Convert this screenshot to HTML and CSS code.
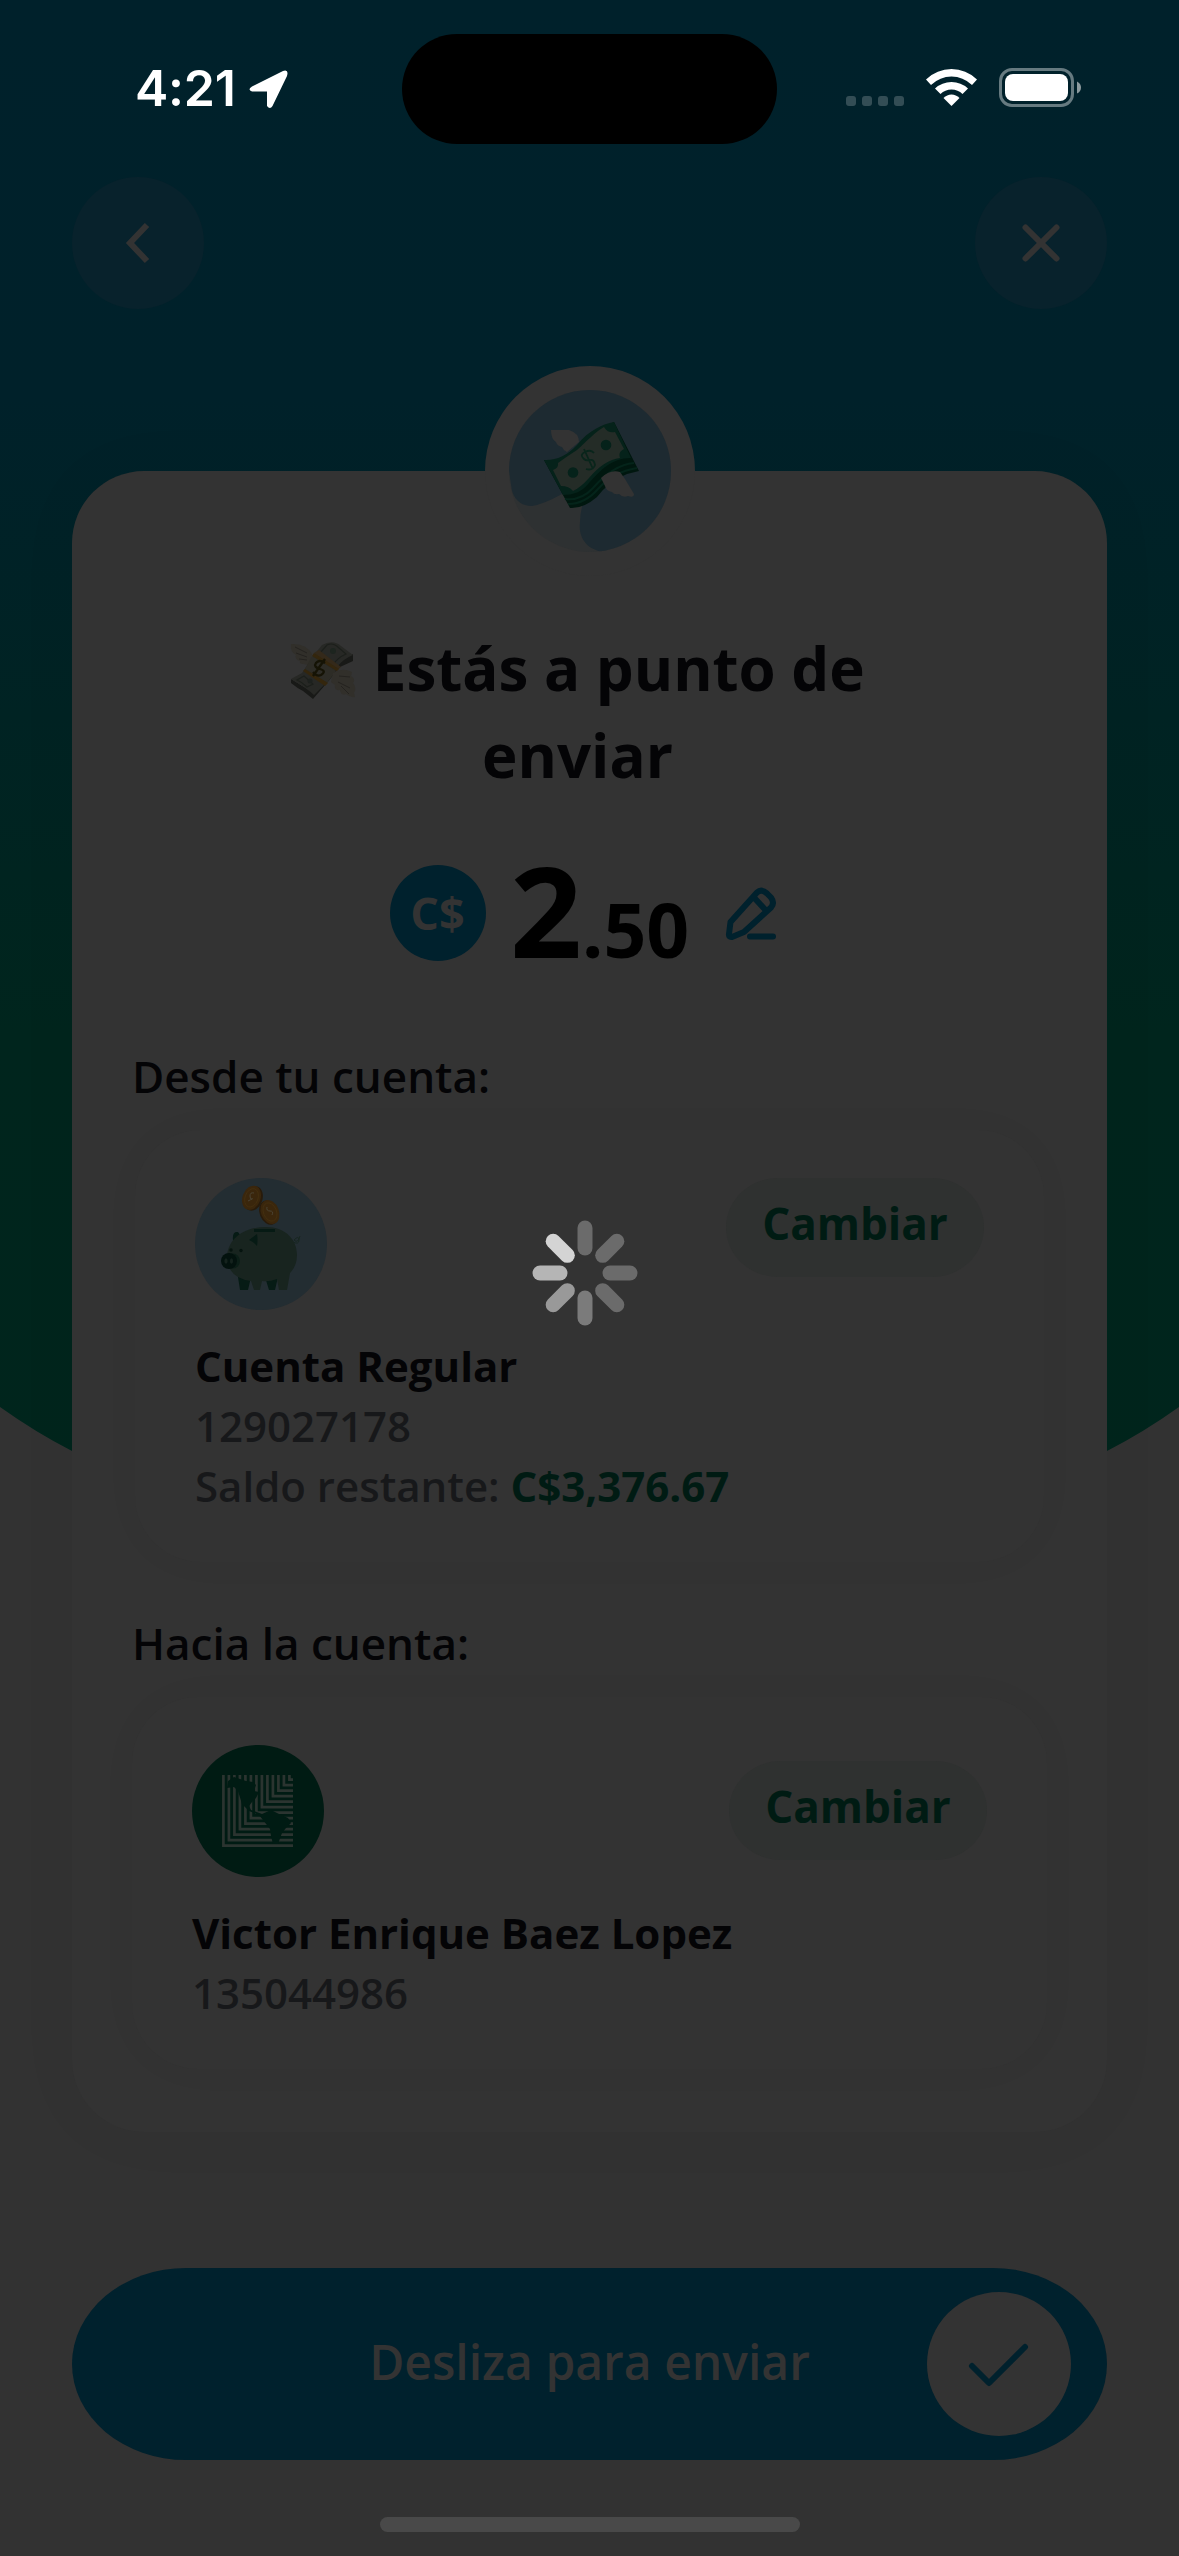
FILE: index.html
```html
<!DOCTYPE html>
<html lang="es">
<head>
<meta charset="utf-8">
<title>Confirmar envío</title>
<link rel="stylesheet" href="styles.css">
</head>
<body>
<div class="screen">
  <svg class="backdrop" viewBox="0 0 1179 1640" aria-hidden="true">
    <defs>
      <linearGradient id="sky" x1="0" y1="0" x2="0" y2="1">
        <stop offset="0" stop-color="#00212b"/>
        <stop offset=".25" stop-color="#00212a"/>
        <stop offset=".45" stop-color="#002323"/>
        <stop offset=".65" stop-color="#00251d"/>
        <stop offset="1" stop-color="#00251c"/>
      </linearGradient>
    </defs>
    <path fill="url(#sky)" d="M0 0H1179V1407Q1144 1432 1107 1451Q860 1590 590 1590Q320 1590 72 1451Q35 1432 0 1407Z"/>
  </svg>

  <header class="status">
    <div class="clock">
      <span class="time">4:21</span>
      <svg class="locate" viewBox="0 0 39 39"><path d="M3 16.500 34 1Q40-1 38 6L23.500 36Q21 40 18 36V21.500H3Q-2 19.500 3 16.500Z" fill="#fff"/></svg>
    </div>
    <div class="island"></div>
    <div class="signals">
      <span class="dots"><i></i><i></i><i></i><i></i></span>
      <svg class="wifi" viewBox="0 0 51 37" fill="#fff">
        <path d="M0 10.500Q11 0 25.500 0T51 10.500L46 16Q37 7.500 25.500 7.500T5 16Z"/>
        <path d="M9 19.500Q16 13 25.500 13T42 19.500L36.500 25Q32 20.500 25.500 20.500T14.500 25Z"/>
        <path d="M17.500 29Q21 25.500 25.500 25.500T33.500 29L25.500 37Z"/>
      </svg>
      <svg class="battery" viewBox="0 0 82 39">
        <rect x="1.500" y="1.500" width="72" height="36" rx="11.500" fill="none" stroke="#667a80" stroke-width="3"/>
        <rect x="6" y="6" width="63" height="27" rx="8" fill="#fff"/>
        <path d="M78 13.500Q82 15.500 82 19.500T78 25.500Z" fill="#8c9a9e"/>
      </svg>
    </div>
  </header>

  <nav class="topnav">
    <button class="round" aria-label="Atrás"><svg viewBox="0 0 132 132"><path d="M75 48 58 66l17 18" stroke-linecap="butt"/></svg></button>
    <button class="round" aria-label="Cerrar"><svg viewBox="0 0 132 132"><path d="m50.500 50.500 31 31m0-31-31 31" stroke-linecap="round"/></svg></button>
  </nav>

  <main class="card">
    <div class="badge">
      <svg viewBox="0 0 162 162">
        <defs><clipPath id="disc"><circle cx="81" cy="81" r="81"/></clipPath></defs>
        <g clip-path="url(#disc)">
          <rect width="162" height="162" fill="#2e3132"/>
          <path fill="#1d2a31" d="M0 0H162V162H95C78 160 69 148 71 132Q71 118 79 99L53 104Q35 114 23 116 8 116 3 101L0 81Z"/>
        </g>
        <path fill="#333" d="M42 40H60Q70 43 70 52L58 62Q54 60 53 57 48 56 47 52 42 49 42 40Z"/>
        <path fill="#00170f" d="M35 70 61 118Q74 119 88 107 100 91 118 84L130 81 105 32Q75 45 65 70Z"/>
        <path fill="none" stroke="#04241a" stroke-width="2" d="M56 109Q72 111 84 98 104 75 125 73M59 114Q76 114 89 99 104 82 128 78"/>
        <path fill="#05221a" d="M35 70Q53 71 68 55C80 40 94 34 105 32L122 68C102 68 91 81 80 93 73 102 64 105 54 105Z"/>
        <path fill="#242c27" d="M49 73Q57 67 68 60C78 51 85 43 95 37 98 42 102 43 106 42L115 59C110 62 110 64 111 68Q95 70 80 88 71 98 64 101 60 96 52 96L44 80Q50 78 49 73Z"/>
        <circle cx="64" cy="82.500" r="5.300" fill="#05221a"/><circle cx="97" cy="55" r="5.300" fill="#05221a"/>
        <path d="M85 63Q82 59 76 62T75 69Q77 71 81 70T86 75Q84 81 77 79M75 59 84 79" fill="none" stroke="#09251b" stroke-width="1.800"/>
        <path fill="#333" d="M92 88Q101 79 111 82L116 89 125 104Q125 108 119 106 114 108 110 104 105 105 103 102 97 101 96 96Z"/>
      </svg>
    </div>

    <h1 class="title"><svg class="emoji" role="img" aria-label="dinero con alas" viewBox="0 0 66 60">
        <path fill="#312f2a" d="M1 3Q16 2 22 13L19 24 13 23Q9 23 10 20 4 18 6 14 0 11 1 3Z"/>
        <path fill="none" stroke="#24221f" stroke-width="1" d="M5 6 17 12M6 12 17 16M9 18 17 19"/>
        <path fill="#181917" d="M1 38V42Q7 47 13 50L23 58 36 43 50 26 63 20V13L50 20 24 52Z"/>
        <path fill="#272825" d="M1 38 12 32 24 14 32 4Q43-2 51 5L63 14Q53 18 47 26L37 41 24 54Q18 48 1 38Z"/>
        <path fill="none" stroke="#1c1f1b" stroke-width="1.200" d="M30 12 37 4Q43 1 49 7L56 13Q47 17 43 24M14 35 23 43 17 46Q12 41 7 39Z"/>
        <path fill="#34291a" d="m24 12 5-3 22 17-5 4Z"/>
        <path fill="#2d2c26" d="m22 15 24 15-9 12-22-14Z"/>
        <path fill="#34260d" d="m24 12 25 16-2 2-25-15ZM15 28l23 14-3 3-22-15Z"/>
        <path fill="none" stroke="#151305" stroke-width="2.300" d="M35 22Q29 18 26 22T30 28 31 34Q27 36 23 31M35 18 23 35"/>
        <circle cx="43" cy="10" r="3" fill="#1d251f"/><circle cx="20" cy="40" r="2.500" fill="#1d211e"/>
        <path fill="#312f2a" d="M43 32Q52 26 62 31L61 35Q66 38 63 42 67 47 64 52L65 56Q61 57 56 53 51 55 50 49 44 50 45 44L41 41Z"/>
        <path fill="none" stroke="#24221f" stroke-width="1" d="M49 35 60 36M48 41 60 47M51 45 59 53"/>
      </svg> Estás a punto de enviar</h1>

    <div class="amount-row">
      <span class="currency">C$</span>
      <span class="amount">2<span class="cents">.50</span></span>
      <svg class="pencil" viewBox="0 0 52 54"><path d="M4 47 5.500 35 32 5.500Q36.500 1.500 42 6.500L46 10.500Q50 16 46 20.500L19 45 7 50Q3.500 50.500 4 47ZM28.500 10 41 23.500M25 49.500H48"/></svg>
    </div>

    <p class="label">Desde tu cuenta:</p>
    <section class="account">
      <div class="account-head">
        <svg class="avatar" viewBox="0 0 132 132">
          <circle cx="66" cy="66" r="66" fill="#232d32"/>
          <path fill="#061b15" d="M43 99H56L53 112H45ZM70 99H83L80 112H74ZM38 62Q37 53 43 54L48 61 41 66Z"/>
          <path fill="#18241f" d="M32 78C34 58 52 49 71 49 91 49 102 62 102 77Q102 88 95 95L92 112H84L82 101Q74 104 67 103L65 112H59L56 103Q32 100 32 78Z"/>
          <path fill="#061a14" d="M59 51H80V54H59ZM54 62 62 56Q63 61 62 68Q59 64 54 62Z"/>
          <ellipse cx="38" cy="83" rx="7" ry="7.500" fill="#0b1e17"/><circle cx="34" cy="83" r="8" fill="#03120e"/>
          <ellipse cx="31" cy="83" rx="1.600" ry="2.800" fill="#14221d"/><ellipse cx="36.500" cy="83" rx="1.600" ry="2.800" fill="#14221d"/>
          <circle cx="36" cy="72" r="1.700" fill="#06140f"/><circle cx="46" cy="72.500" r="1.700" fill="#06140f"/>
          <path fill="none" stroke="#172620" d="M98 64Q104 67 104 62T99 62Q103 66 105 58"/>
          <g transform="rotate(20 57 20)"><ellipse cx="58.500" cy="20" rx="9" ry="12.500" fill="#281b0b"/><ellipse cx="56.500" cy="20" rx="9" ry="12.500" fill="#3a260c"/><ellipse cx="56.500" cy="20" rx="6.500" ry="9.500" fill="none" stroke="#45310f" stroke-width=".7"/></g>
          <g transform="rotate(-22 75 34)"><ellipse cx="73.500" cy="34" rx="9" ry="12.500" fill="#281b0b"/><ellipse cx="75" cy="34" rx="9" ry="12.500" fill="#3a260c"/><ellipse cx="75" cy="34" rx="6.500" ry="9.500" fill="none" stroke="#45310f" stroke-width=".7"/></g>
          <path fill="none" stroke="#4a4333" stroke-width="1" d="M59 15Q55 14 55 18T57 21 53 23M72 29Q71 33 75 33T77 37"/>
        </svg>
        <button class="change">Cambiar</button>
      </div>
      <p class="holder">Cuenta Regular</p>
      <p class="number">129027178</p>
      <p class="number">Saldo restante: <b class="balance">C$3,376.67</b></p>
    </section>

    <p class="label second">Hacia la cuenta:</p>
    <section class="account target">
      <div class="account-head">
        <svg class="avatar" viewBox="0 0 132 132">
          <circle cx="66" cy="66" r="66" fill="#001b13"/>
          <path fill="none" stroke="#2b3430" stroke-width="2.700" d="M31.400 30V100.600H101M36.900 30V95.100H101M42.400 30V89.600H101M47.900 30V84.100H101M53.400 30V78.600H101M58.900 30V73.100H101M64.400 30V67.600H101M69.900 30V62.100H101M75.400 30V56.600H101M80.900 30V51.100H101M86.400 30V45.600H101M91.900 30V40.100H101M97.400 30V34.600H101"/>
          <path fill="#001b13" d="M35 43 36 36 42 32 54 36 61 37 64 40 62 46 67 47 64 53 60 57 57 61 59 65 70 69 79 65 87 69 96 73 99 78 94 83 90 88 86 99H81L79 91 78 84 71 75 67 70 57 66 50 59 46 46 42 42Z"/>
        </svg>
        <button class="change">Cambiar</button>
      </div>
      <p class="holder">Victor Enrique Baez Lopez</p>
      <p class="number">135044986</p>
    </section>
  </main>

  <div class="slider">
    <span class="slider-text">Desliza para enviar</span>
    <span class="knob"><svg viewBox="0 0 144 144"><path d="m45 74 17 17 36-36"/></svg></span>
  </div>
  <div class="home"></div>

  <svg class="spinner" viewBox="-54 -54 108 108" role="img" aria-label="Cargando">
    <g stroke-width="15" stroke-linecap="round">
      <path d="M0-25V-45" stroke="#6b6b6b"/>
      <path d="M0-25V-45" stroke="#6b6b6b" transform="rotate(45)"/>
      <path d="M0-25V-45" stroke="#6b6b6b" transform="rotate(90)"/>
      <path d="M0-25V-45" stroke="#6b6b6b" transform="rotate(135)"/>
      <path d="M0-25V-45" stroke="#7b7b7b" transform="rotate(180)"/>
      <path d="M0-25V-45" stroke="#999" transform="rotate(225)"/>
      <path d="M0-25V-45" stroke="#b5b5b5" transform="rotate(270)"/>
      <path d="M0-25V-45" stroke="#d4d4d4" transform="rotate(315)"/>
    </g>
  </svg>
</div>
</body>
</html>
```
FILE: styles.css
```css
* { box-sizing: border-box; }

body {
  margin: 0;
  background: #323232;
  font-family: "Open Sans", "Noto Sans", sans-serif;
}

h1, p { margin: 0; }
button { border: 0; padding: 0; font: inherit; }
svg { display: block; }

.screen {
  position: relative;
  width: 1179px;
  height: 2556px;
  overflow: hidden;
  display: flex;
  flex-direction: column;
}

.backdrop {
  position: absolute;
  top: 0;
  left: 0;
  width: 1179px;
  height: 1640px;
  z-index: -1;
}

/* Status bar */
.status {
  height: 177px;
  padding: 34px 98px 0 135px;
  display: grid;
  grid-template-columns: 267px 375px 1fr;
  align-items: start;
}
.clock {
  height: 110px;
  display: flex;
  align-items: center;
}
.time {
  width: 114px;
  padding-bottom: 2px;
  font: 600 50px/60px Inter, sans-serif;
  letter-spacing: -.2px;
  white-space: nowrap;
  color: #fff;
}
.locate { width: 39px; height: 39px; }
.island {
  height: 110px;
  border-radius: 55px;
  background: #000;
}
.signals {
  height: 107px;
  display: flex;
  align-items: center;
  justify-content: flex-end;
}
.dots {
  display: flex;
  gap: 6px;
  margin: 27px 22px 0 0;
}
.dots i {
  width: 10px;
  height: 10px;
  border-radius: 3px;
  background: #334d55;
}
.wifi { width: 51px; height: 37px; margin-right: 22px; }
.battery { width: 82px; height: 39px; }

/* Back and close */
.topnav {
  display: flex;
  justify-content: space-between;
  padding: 0 72px;
}
.round {
  width: 132px;
  height: 132px;
  border-radius: 50%;
  background: #08222c;
}
.round svg {
  fill: none;
  stroke: #333;
  stroke-width: 6;
}

/* Main card */
.card {
  position: relative;
  margin: 162px 72px 0;
  padding: 153px 60px 63px;
  height: 1661px;
  border-radius: 72px;
  background: #333;
  box-shadow: 0 0 72px rgba(0, 0, 0, .03);
}
.badge {
  position: absolute;
  top: -105px;
  left: 413px;
  width: 210px;
  height: 210px;
  padding: 24px;
  border-radius: 50%;
  background: #333;
}

.title {
  padding: 1px 144px 0 120px;
  text-align: center;
  font-size: 60px;
  line-height: 87px;
  font-weight: 700;
  color: #040406;
}
.emoji {
  display: inline-block;
  width: 66px;
  height: 60px;
  margin-right: 1px;
  vertical-align: -10px;
}

.amount-row {
  display: flex;
  align-items: center;
  height: 96px;
  margin-top: 66px;
  padding-left: 258px;
}
.currency {
  width: 96px;
  height: 96px;
  border-radius: 50%;
  background: #00212d;
  color: #333;
  font-size: 45px;
  line-height: 96px;
  font-weight: 700;
  text-align: center;
  text-indent: -1px;
}
.amount {
  width: 215px;
  margin: 0 0 8px 24px;
  font-size: 126px;
  line-height: 96px;
  font-weight: 700;
  white-space: nowrap;
  color: #000;
}
.cents { font-size: 75px; line-height: 0; }
.pencil {
  width: 52px;
  height: 54px;
  margin-top: 2px;
  fill: none;
  stroke: #00212d;
  stroke-width: 6;
  stroke-linecap: round;
  stroke-linejoin: round;
}

.label {
  margin: 85px 0 24px;
  font-size: 44px;
  line-height: 60px;
  font-weight: 600;
  color: #040406;
}
.label.second { margin-top: 51px; }

.account {
  height: 432px;
  margin: 0 3px;
  padding: 48px 60px;
  border-radius: 66px;
  background: #333;
  box-shadow: 0 0 54px rgba(0, 0, 0, .02);
}
.account.target { height: 372px; margin: 0; }
.account-head {
  display: flex;
  justify-content: space-between;
  align-items: flex-start;
  margin-bottom: 26px;
}
.avatar { width: 132px; height: 132px; }
.change {
  width: 258px;
  height: 99px;
  padding-bottom: 9px;
  border-radius: 52px / 49.5px;
  background: #2f3130;
  color: #001b13;
  font-size: 44px;
  font-weight: 700;
}
.target .change { margin-top: 16px; }
.holder, .number {
  font-size: 42px;
  line-height: 60px;
  white-space: nowrap;
}
.holder { font-weight: 700; color: #040406; }
.number { font-weight: 600; color: #17181a; }
.balance { font-weight: 700; color: #001b13; }

/* Slide to send */
.slider {
  position: relative;
  display: flex;
  align-items: center;
  justify-content: center;
  height: 192px;
  margin: 136px 72px 0;
  border-radius: 114px / 96px;
  background: #00212d;
}
.slider-text {
  padding-bottom: 5px;
  font-size: 48px;
  line-height: 72px;
  font-weight: 600;
  color: #333;
}
.knob {
  position: absolute;
  top: 24px;
  right: 36px;
  width: 144px;
  height: 144px;
  border-radius: 50%;
  background: #333;
}
.knob svg {
  fill: none;
  stroke: #00212d;
  stroke-width: 6;
  stroke-linecap: round;
  stroke-linejoin: round;
}

.home {
  width: 420px;
  height: 15px;
  margin: 57px auto 0;
  border-radius: 8px;
  background: #494949;
}

.spinner {
  position: absolute;
  left: 531px;
  top: 1219px;
  width: 108px;
  height: 108px;
}
```
